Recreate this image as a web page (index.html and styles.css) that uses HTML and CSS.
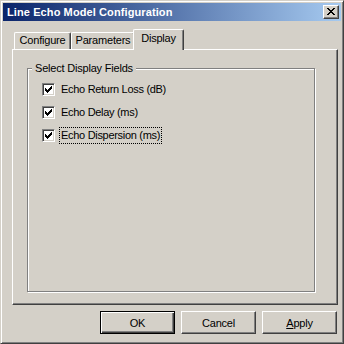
FILE: index.html
```html
<!DOCTYPE html>
<html>
<head>
<meta charset="utf-8">
<link rel="stylesheet" href="styles.css">
</head>
<body>
<div class="window">
  <div class="titlebar">
    <span class="title">Line Echo Model Configuration</span>
    <span class="close">
      <svg width="8" height="7" viewBox="0 0 8 7"><path d="M0 0h2v1h1v1h2v-1h1v-1h2v1h-1v1h-1v1h-1v1h1v1h1v1h1v1h-2v-1h-1v-1h-2v1h-1v1h-2v-1h1v-1h1v-1h1v-1h-1v-1h-1v-1h-1z" fill="#000"/></svg>
    </span>
  </div>
  <div class="client">
    <div class="tabs">
      <div class="tab tab-configure">Configure</div>
      <div class="tab tab-parameters">Parameters</div>
      <div class="tab tab-display selected">Display</div>
    </div>
    <div class="panel">
      <div class="group">
        <div class="legend">Select Display Fields</div>
        <div class="row">
          <span class="check"><svg width="7" height="7" viewBox="0 0 7 7"><path d="M6 0h1v3h-1v1h-1v1h-1v1h-1v1h-1v-1h-1v-1h-1v-3h1v1h1v1h1v-1h1v-1h1v-1h1z" fill="#000"/></svg></span>
          <span class="label">Echo Return Loss (dB)</span>
        </div>
        <div class="row">
          <span class="check"><svg width="7" height="7" viewBox="0 0 7 7"><path d="M6 0h1v3h-1v1h-1v1h-1v1h-1v1h-1v-1h-1v-1h-1v-3h1v1h1v1h1v-1h1v-1h1v-1h1z" fill="#000"/></svg></span>
          <span class="label">Echo Delay (ms)</span>
        </div>
        <div class="row">
          <span class="check"><svg width="7" height="7" viewBox="0 0 7 7"><path d="M6 0h1v3h-1v1h-1v1h-1v1h-1v1h-1v-1h-1v-1h-1v-3h1v1h1v1h1v-1h1v-1h1v-1h1z" fill="#000"/></svg></span>
          <span class="label focus">Echo Dispersion (ms)</span>
        </div>
      </div>
    </div>
    <div class="buttons">
      <div class="btn default">OK</div>
      <div class="btn">Cancel</div>
      <div class="btn"><u>A</u>pply</div>
    </div>
  </div>
</div>
</body>
</html>
```
FILE: styles.css
```css
html, body {
  margin: 0;
  padding: 0;
  background: #d4d0c8;
}
body {
  font-family: "Liberation Sans", Arial, sans-serif;
  font-size: 11px;
  color: #000;
}
.window {
  width: 344px;
  height: 344px;
  box-sizing: border-box;
  border: 1px solid;
  border-color: #d4d0c8 #404040 #404040 #d4d0c8;
  box-shadow: inset 1px 1px #fff, inset -1px -1px #808080;
  padding: 2px;
  background: #d4d0c8;
}
.titlebar {
  height: 18px;
  background: linear-gradient(to right, #0a246a, #a6caf0);
  display: flex;
  align-items: center;
  justify-content: space-between;
  padding: 0 2px 0 4px;
}
.title {
  color: #fff;
  font-weight: bold;
  font-size: 11px;
  letter-spacing: 0.1px;
}
.close {
  width: 16px;
  height: 14px;
  box-sizing: border-box;
  background: #d4d0c8;
  border: 1px solid;
  border-color: #fff #404040 #404040 #fff;
  box-shadow: inset -1px -1px #808080;
  display: flex;
  align-items: center;
  justify-content: center;
  padding: 0 1px 1px 0;
}
.close svg { display: block; }
.client {
  padding: 8px 3px 0 9px;
}
.tabs {
  display: flex;
  align-items: flex-end;
  padding-left: 2px;
  height: 20px;
  position: relative;
  z-index: 1;
}
.tab {
  height: 17px;
  box-sizing: border-box;
  border-top: 1px solid #fff;
  border-left: 1px solid #fff;
  border-right: 1px solid #404040;
  box-shadow: inset -1px 0 #808080;
  border-radius: 2px 2px 0 0;
  background: #d4d0c8;
  text-align: center;
  line-height: 15px;
  letter-spacing: -0.2px;
}
.tab-configure { width: 57px; }
.tab-parameters { width: 64px; }
.tab-display { width: 47px; }
.tab.selected {
  width: 51px;
  height: 21px;
  margin: 0 -2px -1px -2px;
  line-height: 17px;
  padding-bottom: 2px;
}
.panel {
  height: 256px;
  box-sizing: border-box;
  border: 1px solid;
  border-color: #fff #404040 #404040 #fff;
  box-shadow: inset -1px -1px #808080;
  padding: 18px 0 0 14px;
}
.group {
  width: 288px;
  height: 224px;
  box-sizing: border-box;
  border: 1px solid #808080;
  box-shadow: inset 1px 1px #fff, 1px 1px #fff;
  padding: 0 0 0 14px;
}
.legend {
  width: fit-content;
  margin: -7px 0 0 -10px;
  padding: 0 3px;
  background: #d4d0c8;
  line-height: 13px;
  letter-spacing: -0.2px;
}
.row {
  display: flex;
  align-items: center;
  height: 23px;
}
.row:first-of-type { }
.legend + .row { margin-top: 3px; }
.check {
  width: 13px;
  height: 13px;
  box-sizing: border-box;
  background: #fff;
  border: 1px solid;
  border-color: #808080 #fff #fff #808080;
  box-shadow: inset 1px 1px #404040, inset -1px -1px #d4d0c8;
  display: flex;
  align-items: center;
  justify-content: center;
  flex: none;
}
.check svg { display: block; }
.label {
  margin-left: 4px;
  padding: 1px 1px;
  border: 1px dotted transparent;
  line-height: 13px;
  letter-spacing: -0.3px;
}
.label.focus { border-color: #000; }
.buttons {
  display: flex;
  justify-content: flex-end;
  gap: 6px;
  margin-top: 6px;
  padding-right: 1px;
}
.btn {
  width: 75px;
  height: 23px;
  box-sizing: border-box;
  border: 1px solid;
  border-color: #fff #404040 #404040 #fff;
  box-shadow: inset -1px -1px #808080;
  display: flex;
  align-items: center;
  justify-content: center;
  letter-spacing: -0.2px;
}
.btn.default {
  border: 1px solid #000;
  box-shadow: inset 1px 1px #fff, inset -1px -1px #404040, inset -2px -2px #808080;
}
u { text-decoration: underline; }
```
